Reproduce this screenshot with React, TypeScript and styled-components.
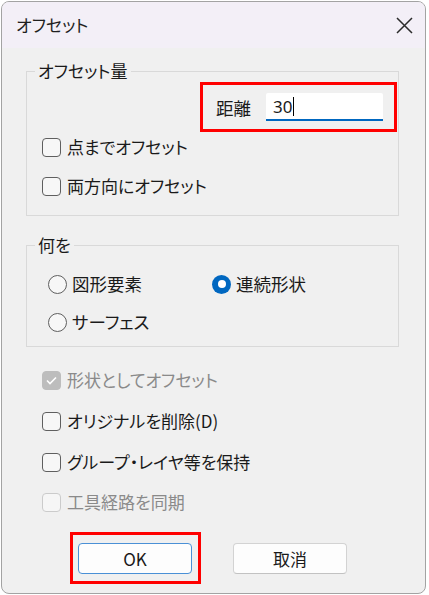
import React from "react";
import styled, { createGlobalStyle } from "styled-components";

const GlobalStyle = createGlobalStyle`
  html, body {
    margin: 0;
    padding: 0;
    background: #ffffff;
  }
  body {
    font-family: "Noto Sans CJK JP", "Noto Sans", sans-serif;
    font-feature-settings: "palt" 1;
  }
`;

const Dialog = styled.div`
  box-sizing: border-box;
  width: 425px;
  height: 593px;
  margin: 1px;
  border: 1px solid #a3a3a3;
  border-radius: 8px;
  overflow: hidden;
  background: #f0f0f0;
  display: flex;
  flex-direction: column;
  color: #1a1a1a;
`;

const TitleBar = styled.div`
  height: 46px;
  background: #f3eff7;
  display: flex;
  align-items: center;
  justify-content: space-between;
  padding: 0 11px 0 14px;
`;

const Title = styled.span`
  font-size: 17px;
  color: #1f1f1f;
  padding-bottom: 2px;
`;

const CloseButton = styled.span`
  width: 20px;
  height: 20px;
  display: flex;
  align-items: center;
  justify-content: center;
`;

const Body = styled.div`
  display: flex;
  flex-direction: column;
  padding: 12px 26px 0 24px;
`;

const Group = styled.fieldset<{ $top?: number }>`
  margin: ${(p) => p.$top ?? 0}px 0 0 0;
  padding: 0 0 ${(p) => (p.$top ? 12 : 17)}px 0;
  border: 1px solid #d9d9d9;
  min-width: 0;
  display: flex;
  flex-direction: column;
`;

const Legend = styled.legend`
  margin-left: 8px;
  padding: 0 3px;
  font-size: 17px;
  line-height: 22px;
`;

const DistanceRow = styled.div`
  display: flex;
  justify-content: flex-end;
  padding-right: 1px;
`;

const Highlight = styled.div`
  box-sizing: border-box;
  border: 3px solid #ff0000;
  display: flex;
  align-items: center;
`;

const DistanceBox = styled(Highlight)`
  width: 197px;
  height: 50px;
  padding: 0 9px 0 13px;
  gap: 15px;
`;

const FieldLabel = styled.span`
  font-size: 17.5px;
`;

const TextInput = styled.div`
  box-sizing: border-box;
  width: 117px;
  height: 28px;
  background: #ffffff;
  border-bottom: 2px solid #0067c0;
  border-radius: 2px 2px 0 0;
  display: flex;
  align-items: center;
  padding-left: 7px;
  font-size: 17px;
  font-family: "Noto Sans", "Noto Sans CJK JP", sans-serif;
`;

const Caret = styled.span`
  display: inline-block;
  width: 1px;
  height: 19px;
  background: #000;
  margin-left: 1px;
`;

const OptionRow = styled.div<{ $top: number; $indent: number }>`
  display: flex;
  align-items: center;
  height: 24px;
  margin-top: ${(p) => p.$top}px;
  padding-left: ${(p) => p.$indent}px;
  gap: 6px;
`;

const Box = styled.span<{ $checked?: boolean; $disabled?: boolean }>`
  box-sizing: border-box;
  width: 19px;
  height: 19px;
  border-radius: 4px;
  flex: none;
  display: flex;
  align-items: center;
  justify-content: center;
  border: 1.5px solid
    ${(p) => (p.$checked && p.$disabled ? "#bdbdbd" : p.$disabled ? "#cbcbcb" : "#5f5f5f")};
  background: ${(p) =>
    p.$checked && p.$disabled ? "#bdbdbd" : p.$disabled ? "#f6f6f6" : "#f7f7f7"};
`;

const OptionText = styled.span<{ $disabled?: boolean }>`
  font-size: 17px;
  line-height: 24px;
  color: ${(p) => (p.$disabled ? "#8a8a8a" : "#1a1a1a")};
`;

const RadioGrid = styled.div`
  display: grid;
  grid-template-columns: 164px 1fr;
  row-gap: 14px;
  margin-top: 16px;
  padding-left: 21px;
`;

const RadioItem = styled.div`
  display: flex;
  align-items: center;
  height: 24px;
  gap: 5px;
`;

const RadioCircle = styled.span<{ $checked?: boolean }>`
  box-sizing: border-box;
  width: 19px;
  height: 19px;
  border-radius: 50%;
  flex: none;
  display: flex;
  align-items: center;
  justify-content: center;
  border: ${(p) => (p.$checked ? "none" : "1.5px solid #5f5f5f")};
  background: ${(p) => (p.$checked ? "#0067c0" : "#f7f7f7")};

  &::after {
    content: "";
    display: ${(p) => (p.$checked ? "block" : "none")};
    width: 8px;
    height: 8px;
    border-radius: 50%;
    background: #ffffff;
  }
`;

const RadioText = styled(OptionText)`
  font-size: 17.5px;
`;

const ButtonRow = styled.div`
  display: flex;
  align-items: center;
  margin-top: 18px;
  padding-left: 44px;
  gap: 32px;
`;

const ButtonFrame = styled(Highlight)`
  width: 131px;
  height: 52px;
  padding: 5px 0 4px 5px;
`;

const Button = styled.button<{ $primary?: boolean }>`
  box-sizing: border-box;
  width: 114px;
  height: 31px;
  border-radius: 4px;
  background: #fdfdfd;
  border: ${(p) => (p.$primary ? "1.5px solid #4a90d6" : "1px solid #d3d3d3")};
  border-bottom-color: ${(p) => (p.$primary ? "#4a90d6" : "#c2c2c2")};
  font-family: "Noto Sans CJK JP", "Noto Sans", sans-serif;
  font-size: 17px;
  color: #1a1a1a;
  padding: 0;
  cursor: default;
`;

const Check = ({ label, checked, disabled, top, indent }: {
  label: string;
  checked?: boolean;
  disabled?: boolean;
  top: number;
  indent: number;
}) => (
  <OptionRow $top={top} $indent={indent}>
    <Box $checked={checked} $disabled={disabled}>
      {checked && (
        <svg width="11" height="9" viewBox="0 0 11 9">
          <path d="M1 4.5 L4 7.5 L10 1.5" fill="none" stroke="#ffffff" strokeWidth="1.6" />
        </svg>
      )}
    </Box>
    <OptionText $disabled={disabled}>{label}</OptionText>
  </OptionRow>
);

const Radio = ({ label, checked }: { label: string; checked?: boolean }) => (
  <RadioItem>
    <RadioCircle $checked={checked} />
    <RadioText>{label}</RadioText>
  </RadioItem>
);

export default function App() {
  return (
    <>
      <GlobalStyle />
      <Dialog>
        <TitleBar>
          <Title>オフセット</Title>
          <CloseButton>
            <svg width="17" height="17" viewBox="0 0 17 17">
              <path d="M1 1 L16 16 M16 1 L1 16" stroke="#2b2b2b" strokeWidth="1.5" />
            </svg>
          </CloseButton>
        </TitleBar>
        <Body>
          <Group>
            <Legend>オフセット量</Legend>
            <DistanceRow>
              <DistanceBox>
                <FieldLabel>距離</FieldLabel>
                <TextInput>
                  30
                  <Caret />
                </TextInput>
              </DistanceBox>
            </DistanceRow>
            <Check label="点までオフセット" top={3} indent={15} />
            <Check label="両方向にオフセット" top={15} indent={15} />
          </Group>

          <Group $top={18}>
            <Legend>何を</Legend>
            <RadioGrid>
              <Radio label="図形要素" />
              <Radio label="連続形状" checked />
              <Radio label="サーフェス" />
            </RadioGrid>
          </Group>

          <Check label="形状としてオフセット" checked disabled top={21} indent={16} />
          <Check label="オリジナルを削除(D)" top={17} indent={16} />
          <Check label="グループ・レイヤ等を保持" top={17} indent={16} />
          <Check label="工具経路を同期" disabled top={16} indent={16} />

          <ButtonRow>
            <ButtonFrame>
              <Button $primary>OK</Button>
            </ButtonFrame>
            <Button>取消</Button>
          </ButtonRow>
        </Body>
      </Dialog>
    </>
  );
}
